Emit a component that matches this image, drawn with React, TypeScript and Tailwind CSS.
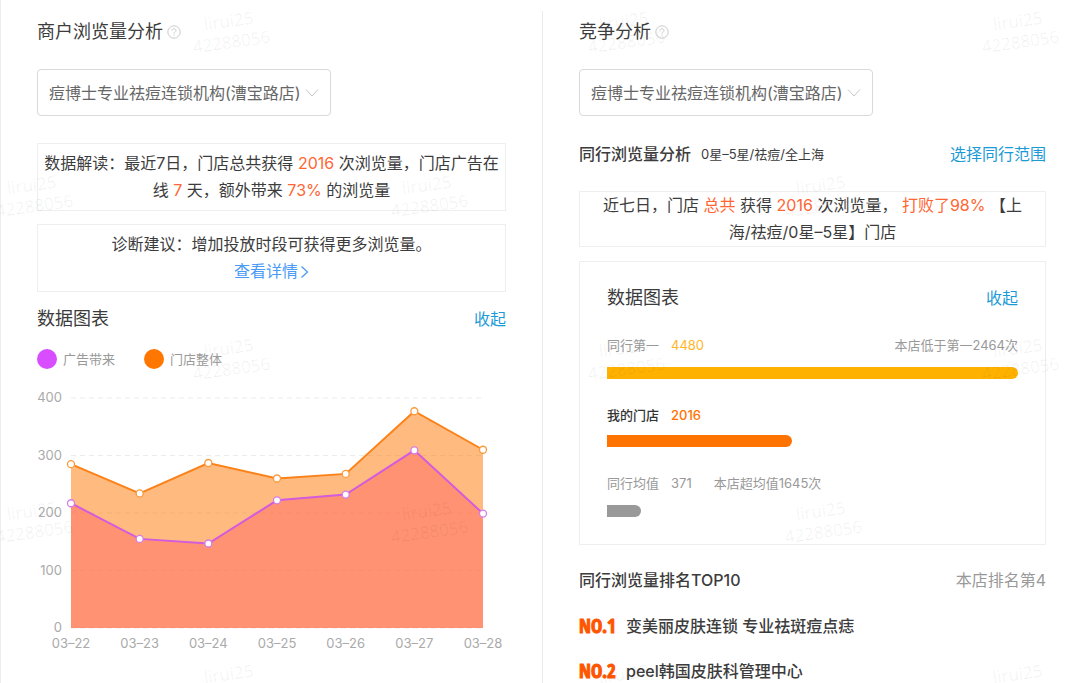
import React from "react";

const STORE = "痘博士专业祛痘连锁机构(漕宝路店)";

const DAYS = ["03–22", "03–23", "03–24", "03–25", "03–26", "03–27", "03–28"];
const TOTAL = [285, 234, 287, 260, 268, 377, 310];
const ADS = [217, 155, 147, 222, 232, 309, 199];

const CHART = { left: 34, right: 446, top: 6, bottom: 236 };
const px = (i: number) => CHART.left + (i * (CHART.right - CHART.left)) / (DAYS.length - 1);
const py = (v: number) => CHART.bottom - (v * (CHART.bottom - CHART.top)) / 400;
const line = (data: number[]) => data.map((v, i) => `${px(i)},${py(v)}`).join(" ");
const area = (data: number[]) =>
  `${CHART.left},${CHART.bottom} ${line(data)} ${CHART.right},${CHART.bottom}`;

function HelpIcon() {
  return (
    <svg className="size-[14px]" viewBox="0 0 14 14" fill="none" stroke="#cacaca" aria-hidden="true">
      <circle cx="7" cy="7" r="6.2" />
      <path d="M5.1 5.6a1.9 1.9 0 1 1 2.9 1.6c-.7.4-1 .7-1 1.4" />
      <path d="M7 9.6v1.1" />
    </svg>
  );
}

function PanelTitle({ children }: { children: React.ReactNode }) {
  return (
    <div className="flex items-center gap-1">
      <h2 className="text-[18px] leading-[26px]">{children}</h2>
      <HelpIcon />
    </div>
  );
}

function StoreSelect({ label }: { label: string }) {
  return (
    <div className="relative mt-6 w-[294px] max-w-full">
      <select
        aria-label={label}
        className="block h-[47px] w-full appearance-none rounded-[4px] border border-[#d9d9d9] bg-white pl-[11px] pr-7 text-[16px] text-[#666]"
      >
        <option>{STORE}</option>
      </select>
      <svg
        className="pointer-events-none absolute right-3 top-[19px] h-[10px] w-[14px]"
        viewBox="0 0 14 10"
        fill="none"
        stroke="#c8c8c8"
        aria-hidden="true"
      >
        <path d="M1 1.5 7 8l6-6.5" />
      </svg>
    </div>
  );
}

function Hot({ children }: { children: React.ReactNode }) {
  return <span className="text-[#ff6633]">{children}</span>;
}

function ChartHeader() {
  return (
    <div className="flex items-center justify-between">
      <h3 className="text-[18px] leading-[26px] text-[#3c3c3c]">数据图表</h3>
      <button type="button" className="text-[16px] leading-6 text-[#1b9ad6]">
        收起
      </button>
    </div>
  );
}

function Legend({ dot, children }: { dot: string; children: React.ReactNode }) {
  return (
    <li className="flex items-center gap-[6px]">
      <span className={`size-[20px] rounded-full ${dot}`} />
      {children}
    </li>
  );
}

function ViewsChart() {
  return (
    <svg
      className="mt-[23px] block w-full overflow-visible"
      viewBox="0 0 469 264"
      role="img"
      aria-label="浏览量"
    >
      {[400, 300, 200, 100, 0].map((v) => (
        <g key={v}>
          <line x1={CHART.left} x2={CHART.right} y1={py(v)} y2={py(v)} stroke="#ebebeb" strokeDasharray="5 4" />
          <text x="25" y={py(v) + 4} textAnchor="end" fontSize="13" fill="#aaa">
            {v}
          </text>
        </g>
      ))}
      <polygon points={area(TOTAL)} fill="#ff7600" fillOpacity="0.5" />
      <polygon points={area(ADS)} fill="#ff6a65" fillOpacity="0.5" />
      <polyline points={line(TOTAL)} fill="none" stroke="#fa8219" strokeWidth="2" />
      <polyline points={line(ADS)} fill="none" stroke="#d35bdd" strokeWidth="2" />
      {TOTAL.map((v, i) => (
        <circle key={i} cx={px(i)} cy={py(v)} r="3.5" fill="#fff" stroke="#f99a3c" strokeWidth="1.3" />
      ))}
      {ADS.map((v, i) => (
        <circle key={i} cx={px(i)} cy={py(v)} r="3.5" fill="#fff" stroke="#d87be6" strokeWidth="1.3" />
      ))}
      {DAYS.map((d, i) => (
        <text key={d} x={px(i)} y="256" textAnchor="middle" fontSize="13" fill="#aaa">
          {d}
        </text>
      ))}
    </svg>
  );
}

function Bar({ value, color }: { value: number; color: string }) {
  return (
    <div className={`h-[12px] rounded-r-full ${color}`} style={{ width: `${(value / 4480) * 100}%` }} />
  );
}

function Rank({ no, children }: { no: string; children: React.ReactNode }) {
  return (
    <li className="flex h-[45px] items-center">
      <span className="w-[47px] font-['Noto_Sans_ExtraCondensed','Open_Sans_Condensed','Roboto_Condensed','Liberation_Sans',sans-serif] text-[19px] font-black leading-6 text-[#ff5500] [-webkit-text-stroke:1px_#ff5500]">
        {no}
      </span>
      <span className="text-[16px] font-medium leading-6">{children}</span>
    </li>
  );
}

const MARKS: [number, number][] = [
  [230, 31], [625, 31], [1019, 31],
  [33, 195], [428, 195], [822, 195],
  [230, 358], [625, 358], [1019, 358],
  [33, 521], [428, 521], [822, 521],
  [230, 684], [625, 684], [1019, 684],
];

function Watermark() {
  return (
    <div
      aria-hidden="true"
      className="pointer-events-none absolute inset-0 overflow-hidden font-['Open_Sans',sans-serif] text-[17px] leading-[21px] text-black/[0.06]"
    >
      {MARKS.map(([x, y]) => (
        <div
          key={`${x}-${y}`}
          className="absolute w-20 -translate-x-1/2 -translate-y-1/2 -rotate-8 text-center"
          style={{ left: x, top: y }}
        >
          lirui25
          <br />
          42288056
        </div>
      ))}
    </div>
  );
}

export default function App() {
  return (
    <div className="relative h-screen overflow-hidden bg-white font-['Inter','Noto_Sans_CJK_SC',sans-serif] text-[#3c3c3c]">
      <main className="grid grid-cols-[542fr_537fr] border-l border-[#ededed] pt-[11px]">
        <section className="min-h-screen border-r border-[#ebebeb] pl-9 pr-9 pt-2">
          <PanelTitle>商户浏览量分析</PanelTitle>
          <StoreSelect label="浏览量分析门店" />

          <div className="mt-[27px] border border-[#eee] py-[6px] text-center text-[16px] leading-[27px]">
            数据解读：最近7日，门店总共获得 <Hot>2016</Hot> 次浏览量，门店广告在线 <Hot>7</Hot>{" "}
            天，额外带来 <Hot>73%</Hot> 的浏览量
          </div>
          <div className="mt-[13px] border border-[#eee] py-[6px] text-center text-[16px] leading-[27px]">
            <p>诊断建议：增加投放时段可获得更多浏览量。</p>
            <a href="#detail" className="inline-flex items-center gap-[2px] text-[#4a9bf5]">
              查看详情
              <svg className="h-[14px] w-[9px]" viewBox="0 0 9 14" fill="none" stroke="currentColor" strokeWidth="1.3" aria-hidden="true">
                <path d="m1.5 1.5 6 5.5-6 5.5" />
              </svg>
            </a>
          </div>

          <div className="mt-[14px]">
            <ChartHeader />
          </div>
          <ul className="mt-[17px] flex gap-[29px] text-[13px] leading-5 text-[#999]">
            <Legend dot="bg-[#d84dff]">广告带来</Legend>
            <Legend dot="bg-[#ff7600]">门店整体</Legend>
          </ul>
          <ViewsChart />
        </section>

        <section className="pl-9 pr-[34px] pt-2">
          <PanelTitle>竞争分析</PanelTitle>
          <StoreSelect label="竞争分析门店" />

          <div className="mt-[26px] flex items-center leading-6">
            <h3 className="text-[16px] font-medium">同行浏览量分析</h3>
            <span className="ml-[10px] text-[13px]">0星–5星/祛痘/全上海</span>
            <button type="button" className="ml-auto text-[16px] text-[#1b9ad6]">
              选择同行范围
            </button>
          </div>

          <div className="mt-[25px] border border-[#eee] px-5 text-center text-[16px] leading-[27px]">
            近七日，门店 <Hot>总共</Hot> 获得 <Hot>2016</Hot> 次浏览量， <Hot>打败了98%</Hot>{" "}
            【上海/祛痘/0星–5星】门店
          </div>

          <div className="mt-[14px] border border-[#eee] px-[27px] pb-[27px] pt-[23px] text-[13px] leading-5 text-[#999]">
            <ChartHeader />
            <div className="mb-[12px] mt-6 flex gap-3">
              <span>同行第一</span>
              <span className="text-[#ffb629]">4480</span>
              <span className="ml-auto">本店低于第一2464次</span>
            </div>
            <Bar value={4480} color="bg-[#ffb100]" />
            <div className="mb-[10px] mt-[26px] flex gap-3 font-medium">
              <span className="text-[#333]">我的门店</span>
              <span className="text-[#ff7300]">2016</span>
            </div>
            <Bar value={2016} color="bg-[#ff7300]" />
            <div className="mb-[12px] mt-[26px] flex gap-3">
              <span>同行均值</span>
              <span>371</span>
              <span className="ml-[10px]">本店超均值1645次</span>
            </div>
            <Bar value={371} color="bg-[#999]" />
          </div>

          <div className="mt-[23px] flex items-center justify-between text-[16px] leading-6">
            <h3 className="font-medium">同行浏览量排名TOP10</h3>
            <span className="text-[#999]">本店排名第4</span>
          </div>
          <ol className="mt-[11px]">
            <Rank no="NO.1">变美丽皮肤连锁 专业祛斑痘点痣</Rank>
            <Rank no="NO.2">peel韩国皮肤科管理中心</Rank>
          </ol>
        </section>
      </main>
      <Watermark />
    </div>
  );
}
